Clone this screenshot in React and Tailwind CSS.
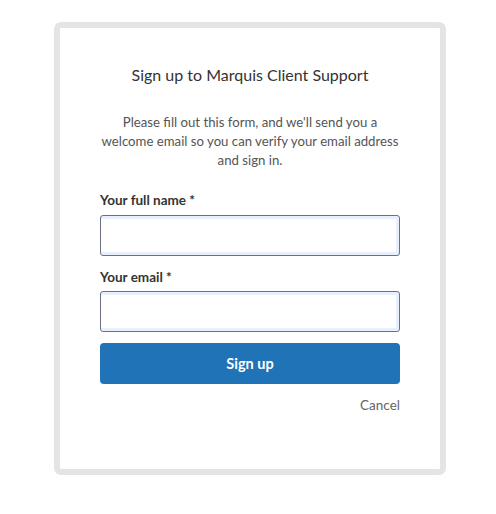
import React from "react";

const App = () => {
  return (
    <div
      className="min-h-[514px] w-full bg-white pt-[22px]"
      style={{ fontFamily: 'Lato, "Noto Sans", sans-serif' }}
    >
      <div className="ml-[54px] w-[392px] h-[453px] rounded-[7px] border-[6px] border-[#e4e4e4] bg-white px-[40px]">
        <h1 className="mt-[36px] text-center text-[16px] leading-[22px] text-[#333]">
          Sign up to Marquis Client Support
        </h1>

        <p className="mt-[27px] text-center text-[13.2px] leading-[19px] text-[#555]">
          Please fill out this form, and we'll send you a welcome email so you
          can verify your email address and sign in.
        </p>

        <form className="mt-[21px] flex flex-col">
          <label className="text-[13.5px] font-bold leading-[18px] text-[#333]">
            Your full name *
          </label>
          <input
            type="text"
            className="mt-[6px] h-[41px] w-full rounded-[3px] border border-[#6b7083] bg-white shadow-[inset_0_3px_0_#e8f0fe,inset_0_-3px_0_#e8f0fe,inset_-3px_0_0_#e8f0fe] outline-none"
          />

          <label className="mt-[12px] text-[13.5px] font-bold leading-[18px] text-[#333]">
            Your email *
          </label>
          <input
            type="email"
            className="mt-[5px] h-[41px] w-full rounded-[3px] border border-[#6b7083] bg-white shadow-[inset_0_3px_0_#e8f0fe,inset_0_-3px_0_#e8f0fe,inset_-3px_0_0_#e8f0fe] outline-none"
          />

          <button
            type="button"
            className="mt-[11px] h-[41px] w-full rounded-[4px] bg-[#2073b7] text-[14.5px] font-bold text-white"
          >
            Sign up
          </button>

          <div className="mt-[8px] text-right">
            <a className="text-[13.5px] leading-[18px] text-[#666]">Cancel</a>
          </div>
        </form>
      </div>
    </div>
  );
};

export default App;
